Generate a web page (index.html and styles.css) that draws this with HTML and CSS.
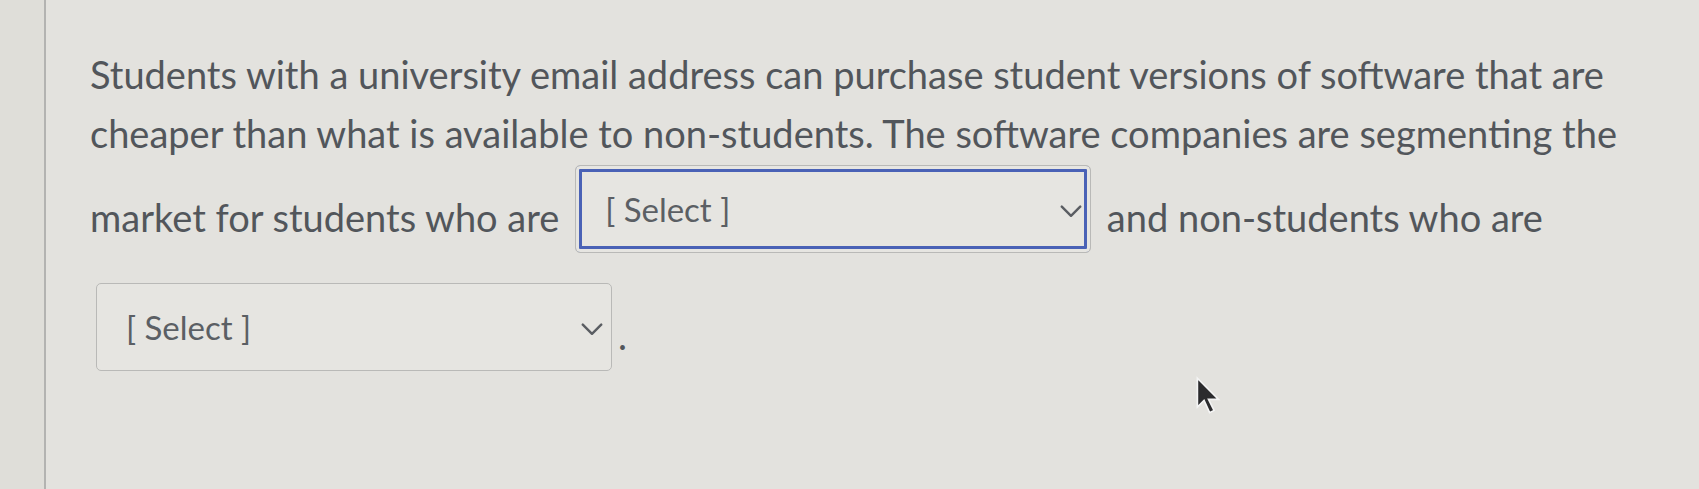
FILE: index.html
```html
<!DOCTYPE html>
<html lang="en">
<head>
<meta charset="utf-8">
<title>Question</title>
<link rel="stylesheet" href="styles.css">
</head>
<body>
<div class="page">
  <aside class="rail"></aside>
  <main class="content">
    <p class="question"><span class="run">Students with a university email address can purchase student versions of software that are</span> <span class="run">cheaper than what is available to non-students. The software companies are segmenting the</span> <span class="run">market for students who are</span> <span class="select is-focused" role="combobox" aria-expanded="false"><span class="select-label">[ Select ]</span><svg class="chevron" viewBox="0 0 20 12" aria-hidden="true"><path d="M1.5 1.5 L10 10 L18.5 1.5"/></svg></span> <span class="run">and non-students who are</span> <span class="select" role="combobox" aria-expanded="false"><span class="select-label">[ Select ]</span><svg class="chevron" viewBox="0 0 20 12" aria-hidden="true"><path d="M1.5 1.5 L10 10 L18.5 1.5"/></svg></span><span class="run">.</span></p>
  </main>
  <svg class="cursor" viewBox="0 0 24 36" aria-hidden="true"><path d="M2 2 L2 28 L8 22 L13 33 L17 31 L12 21 L21 21 Z"/></svg>
</div>
</body>
</html>
```

FILE: styles.css
```css
html, body {
  margin: 0;
  height: 100%;
}
body {
  background: #e3e2de;
  font-family: Lato, "Noto Sans", sans-serif;
  color: #52565b;
  overflow: hidden;
}
.page {
  position: relative;
  display: flex;
  min-height: 100vh;
}
.rail {
  flex: 0 0 44px;
  background: #dfded9;
  border-right: 2px solid #b3b3b1;
}
.content {
  flex: 1;
  padding: 45px 40px 0 44px;
}
.question {
  margin: 0;
  font-size: 38px;
  line-height: 59px;
}
.select {
  display: inline-flex;
  align-items: center;
  justify-content: space-between;
  box-sizing: border-box;
  width: 516px;
  height: 88px;
  margin: 2px 6px 28px 6px;
  padding: 0 8px 0 29px;
  vertical-align: 10px;
  border: 1px solid #b9b9b7;
  border-radius: 5px;
  background: #e6e5e1;
  color: #5b5f64;
  font-size: 33px;
  line-height: 38px;
}
.select.is-focused {
  box-shadow: inset 0 0 0 3px #e6e5e1, inset 0 0 0 6px #4a62b6;
}
.chevron {
  width: 22px;
  height: 13px;
  margin-top: 4px;
  fill: none;
  stroke: #5a5d62;
  stroke-width: 2.2;
  stroke-linecap: round;
  stroke-linejoin: round;
}
.cursor {
  position: absolute;
  left: 1195px;
  top: 376px;
  width: 27px;
  height: 40px;
  fill: #2b2b2d;
  stroke: #f4f4f4;
  stroke-width: 1.5;
}
```
